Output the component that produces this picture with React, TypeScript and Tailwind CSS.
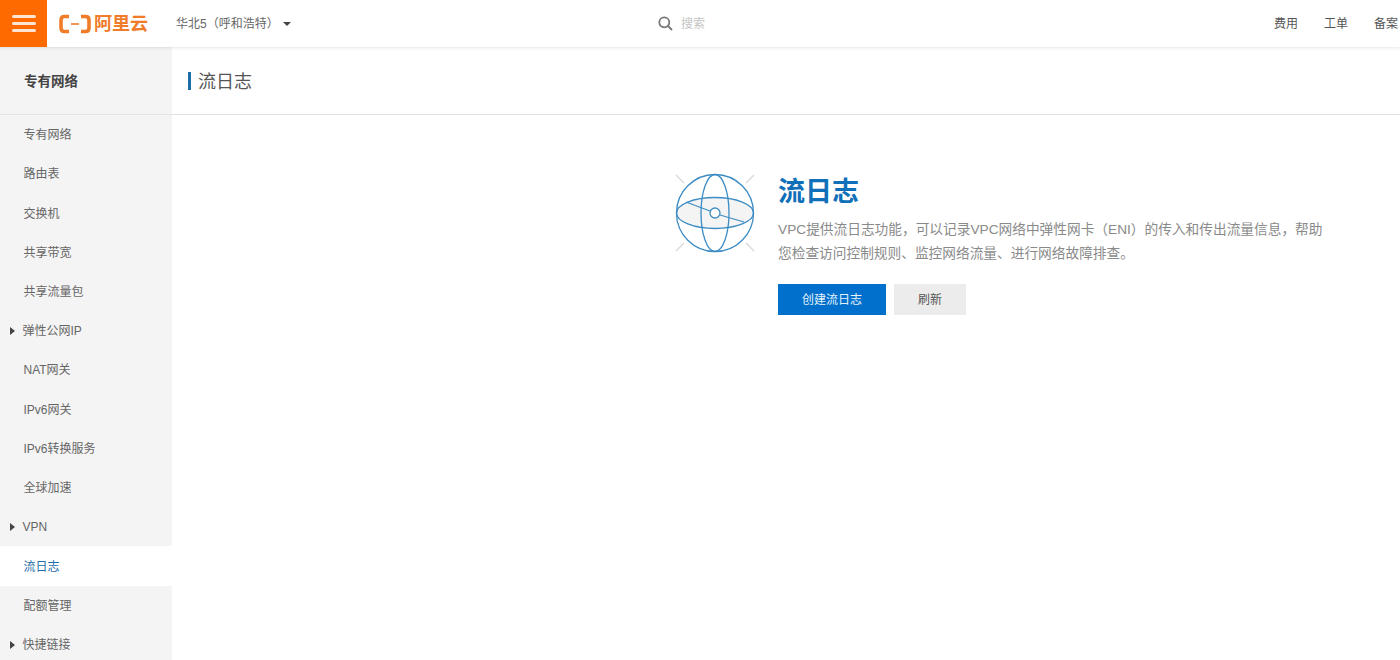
import React from "react";

const items: { label: string; arrow?: boolean; active?: boolean }[] = [
  { label: "专有网络" },
  { label: "路由表" },
  { label: "交换机" },
  { label: "共享带宽" },
  { label: "共享流量包" },
  { label: "弹性公网IP", arrow: true },
  { label: "NAT网关" },
  { label: "IPv6网关" },
  { label: "IPv6转换服务" },
  { label: "全球加速" },
  { label: "VPN", arrow: true },
  { label: "流日志", active: true },
  { label: "配额管理" },
  { label: "快捷链接", arrow: true },
];

function Globe() {
  return (
    <svg width="82" height="82" viewBox="0 0 82 82" fill="none">
      <g stroke="#d8d8d8" strokeWidth="1.3">
        <path d="M2 3l8 8M80 3l-8 8M2 79l8-8M80 79l-8-8" />
      </g>
      <ellipse cx="41" cy="41" rx="38.5" ry="15.5" fill="#f4f4f4" stroke="#3c8cc4" strokeWidth="1.3" />
      <g stroke="#3c8cc4" strokeWidth="1.3">
        <circle cx="41" cy="41" r="38.5" />
        <ellipse cx="41" cy="41" rx="14" ry="38.5" />
        <path d="M12 30L36 39M46 43L70 50" />
        <circle cx="41" cy="41" r="5" fill="#fff" />
      </g>
    </svg>
  );
}

export default function App() {
  return (
    <div className="relative h-[660px] w-[1400px] overflow-hidden bg-white font-['Liberation_Sans','Noto_Sans_CJK_SC',sans-serif] text-xs text-[#555]">
      <header className="relative z-10 flex h-[47px] items-center bg-white shadow-[0_1px_3px_rgba(0,0,0,0.1)]">
        <div className="flex h-[47px] w-[47px] shrink-0 flex-col items-center justify-center gap-[4px] bg-[#ff6a00]">
          <span className="h-[3px] w-[24px] rounded-sm bg-[#fbe5d2]" />
          <span className="h-[3px] w-[24px] rounded-sm bg-[#fbe5d2]" />
          <span className="h-[3px] w-[24px] rounded-sm bg-[#fbe5d2]" />
        </div>
        <div className="ml-[12px] flex w-[117px] shrink-0 items-center gap-[3px]">
          <svg width="32" height="20" viewBox="0 0 32 20" fill="none" stroke="#f07c2a" strokeWidth="3.6">
            <path d="M10 2.5H5.5Q2 2.5 2 6V14Q2 17.5 5.5 17.5H10" />
            <path d="M22 2.5H26.5Q30 2.5 30 6V14Q30 17.5 26.5 17.5H22" />
            <path d="M12 10H20" strokeWidth="1.6" />
          </svg>
          <span className="text-[18px] leading-none font-bold text-[#f07c2a]">阿里云</span>
        </div>
        <div className="flex w-[482px] shrink-0 items-center gap-[4px] text-[12px] text-[#666]">
          <span>华北5（呼和浩特）</span>
          <span className="h-0 w-0 border-x-[4px] border-t-[4px] border-x-transparent border-t-[#444]" />
        </div>
        <div className="flex items-center gap-[8px]">
          <svg width="15" height="15" viewBox="0 0 15 15" fill="none" stroke="#777" strokeWidth="1.8">
            <circle cx="6.3" cy="6.3" r="5" />
            <path d="M10 10l4 4" />
          </svg>
          <span className="text-[12px] text-[#c4c4c4]">搜索</span>
        </div>
        <div className="ml-auto flex w-[126px] shrink-0 gap-[26px] overflow-hidden text-[12px] whitespace-nowrap text-[#555]">
          <span className="shrink-0">费用</span>
          <span className="shrink-0">工单</span>
          <span className="shrink-0">备案</span>
        </div>
      </header>
      <div className="flex h-[613px]">
        <aside className="w-[172px] shrink-0 overflow-hidden bg-[#f4f4f4]">
          <div className="flex h-[68px] items-center border-b border-[#e4e4e4] pt-[2px] pl-[24px] text-[13.5px] font-bold text-[#444]">
            专有网络
          </div>
          {items.map((it) => (
            <div
              key={it.label}
              className={`relative flex h-[39.22px] items-center pt-[1px] text-[12px] ${
                it.arrow ? "pl-[22.5px]" : "pl-[23.5px]"
              } ${it.active ? "bg-white text-[#1f6fa8]" : "text-[#666]"}`}
            >
              {it.arrow && (
                <span className="absolute top-[16px] left-[10px] h-0 w-0 border-y-[4.5px] border-l-[5px] border-y-transparent border-l-[#444]" />
              )}
              {it.label}
            </div>
          ))}
        </aside>
        <main className="min-w-0 flex-1">
          <div className="flex h-[68px] items-center border-b border-[#e2e2e2] pl-[16px]">
            <span className="mr-[7px] h-[18px] w-[3px] bg-[#1b6ea8]" />
            <span className="pt-[2px] text-[18px] text-[#555]">流日志</span>
          </div>
          <div className="flex pt-[57px] pl-[502px]">
            <div className="mr-[22px] shrink-0">
              <Globe />
            </div>
            <div className="w-[550px]">
              <h1 className="pt-[3px] text-[27px] leading-[35px] font-bold text-[#0f6fb8]">流日志</h1>
              <p className="mt-[8px] text-[13.7px] leading-[24px] text-[#8a8a8a]">
                VPC提供流日志功能，可以记录VPC网络中弹性网卡（ENI）的传入和传出流量信息，帮助您检查访问控制规则、监控网络流量、进行网络故障排查。
              </p>
              <div className="mt-[18px] flex gap-[8px]">
                <button className="h-[31px] w-[108px] bg-[#0070cc] text-[12px] text-[#e6f2fb]">创建流日志</button>
                <button className="h-[31px] w-[72px] bg-[#ececec] text-[12px] text-[#555]">刷新</button>
              </div>
            </div>
          </div>
        </main>
      </div>
    </div>
  );
}
